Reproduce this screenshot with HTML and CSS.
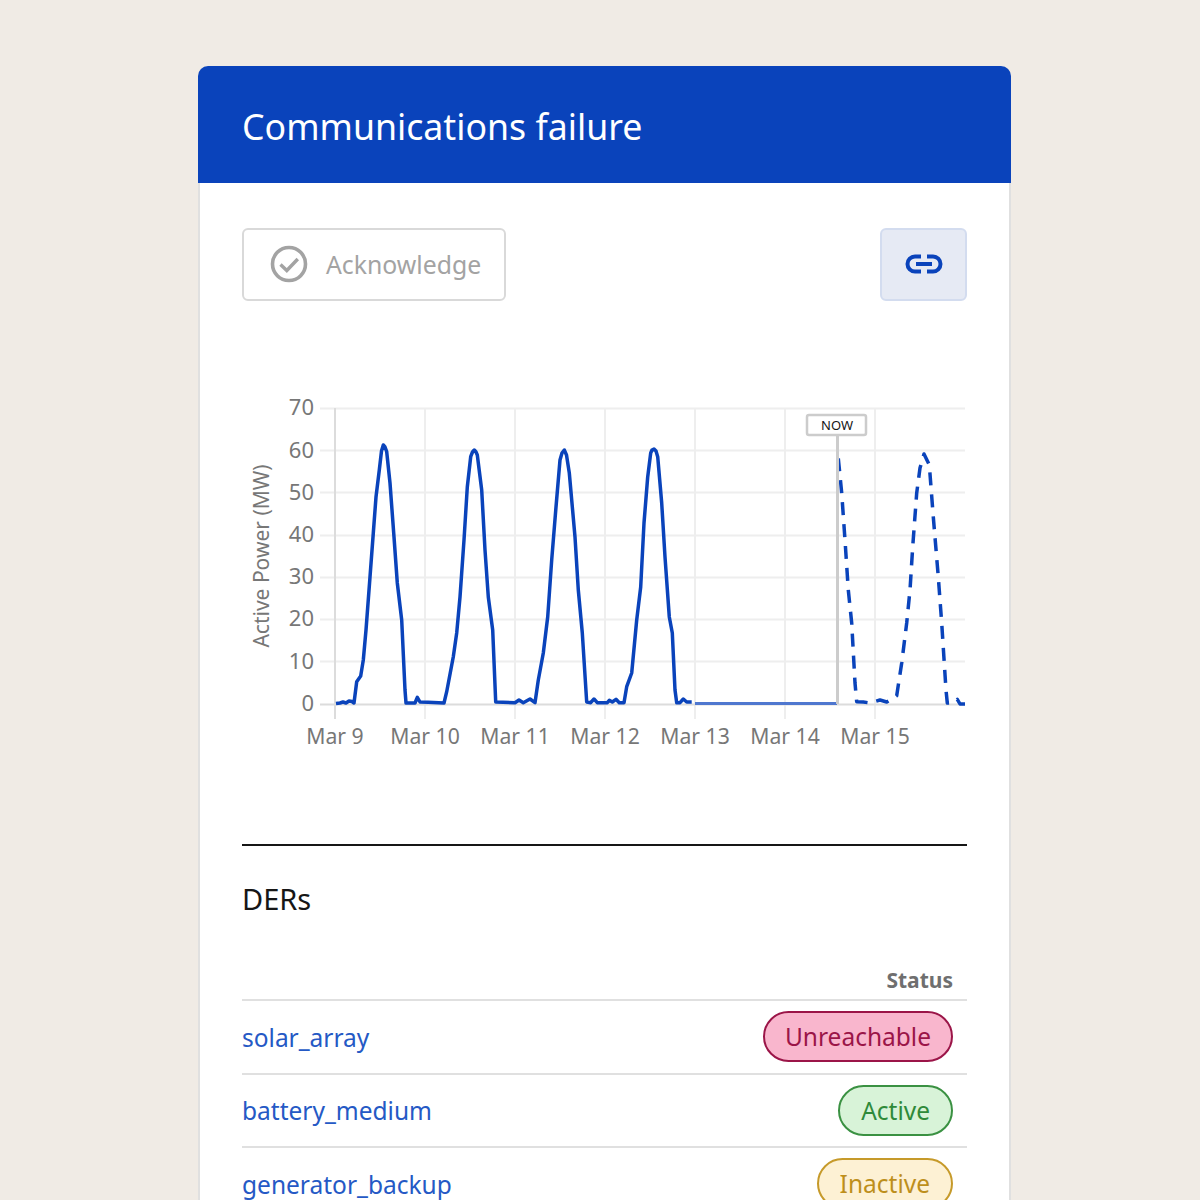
FILE: index.html
```html
<!DOCTYPE html>
<html lang="en">
<head>
<meta charset="UTF-8" />
<title>Communications failure</title>
<link rel="stylesheet" href="styles.css">
</head>
<body>
<div class="card">
  <div class="card-header">
    <h1>Communications failure</h1>
  </div>
  <div class="card-body">
    <div class="actions">
      <button class="ack-btn" type="button" disabled>
        <svg class="ack-icon" viewBox="0 0 38 38" width="38" height="38" aria-hidden="true">
          <circle cx="19" cy="19" r="16.5" fill="none" stroke="#a3a3a3" stroke-width="3.6"/>
          <path d="M10.5 19.5l6.3 6 11-11.5" fill="none" stroke="#a3a3a3" stroke-width="3.4"/>
        </svg>
        <span>Acknowledge</span>
      </button>
      <button class="link-btn" type="button" aria-label="Copy link">
        <svg viewBox="0 0 38 20" width="38" height="20" aria-hidden="true">
          <path d="M16 2.5H10a7.5 7.5 0 0 0 0 15h6M22 2.5h6a7.5 7.5 0 0 1 0 15h-6M11 10h16" fill="none" stroke="#0a43bb" stroke-width="4"/>
        </svg>
      </button>
    </div>

    <svg class="chart" viewBox="242 380 725 400" width="725" height="400" role="img" aria-label="Active power chart">
      <g class="grid">
        <path d="M320 408.5H965M320 450.5H965M320 492.5H965M320 535.5H965M320 577.5H965M320 619.5H965M320 661.5H965"/>
        <path d="M425 408V719M515 408V719M605 408V719M695 408V719M785 408V719M875 408V719"/>
      </g>
      <path class="axis" d="M335 408V719M320 704.5H965"/>

      <g class="y-labels">
        <text x="314" y="415">70</text>
        <text x="314" y="458">60</text>
        <text x="314" y="500">50</text>
        <text x="314" y="542">40</text>
        <text x="314" y="584">30</text>
        <text x="314" y="626">20</text>
        <text x="314" y="669">10</text>
        <text x="314" y="711">0</text>
      </g>
      <g class="x-labels">
        <text x="335" y="744">Mar 9</text>
        <text x="425" y="744">Mar 10</text>
        <text x="515" y="744">Mar 11</text>
        <text x="605" y="744">Mar 12</text>
        <text x="695" y="744">Mar 13</text>
        <text x="785" y="744">Mar 14</text>
        <text x="875" y="744">Mar 15</text>
      </g>
      <text class="y-title" transform="translate(269 556) rotate(-90)">Active Power (MW)</text>

      <polyline class="series" points="336,703.5 340,703 343,702 346,703 349,701 352,701.5 354,703 356.7,681.7 360.7,676 363.3,660 366,630 370,577 373.3,533 376,497 379.3,470 381.5,451 383.3,445 385,447 386.7,451.7 390,483 394,537 397.3,583 401.7,620 405,690 406,703 415,703 417.3,697.3 420,702 428,702.3 444,703 446.7,691.7 453.3,656.7 456.7,633 460,597 464,540 467.3,487 470.7,456.7 472.5,452 474.3,450 476,452 477.3,455 481.7,490 485,550 488.3,597 492.7,630 495.7,702 515,702.7 519,700 523.3,702.7 530,699 535,702.7 538.3,680 543.3,653 547.7,617 551.7,560 556,507 560,460 562,453 564.3,450 566.5,455 569.3,473 575,537 578.3,590 582.3,633 586.7,702 590.7,702.7 594,699 597.3,702.7 607.3,702.7 609.3,700.3 612.3,702 616,699.3 619.3,702.7 624,702.7 626.7,686.7 631.7,673 636.7,620 640.7,587 644,523 647.7,477 650.7,453 652,450 654,449 656,451 657.7,456.7 661.7,503 665,557 669.3,617 672.3,633 675,690 676.7,702.7 680,702.7 683.3,699 686.7,702 691.7,702"/>
      <path class="series-gap" d="M695 703.5H837"/>
      <polyline class="series forecast" points="838.3,458.3 841.7,493 845,540 848.3,590 851.7,623 855,683 856.7,701.7 863.3,702 870,703 880,700 886.7,702 896.7,695.7 901.7,663 906.7,623 910,590 912.7,547 916.7,493 920,468 924,454 929.3,465 933.3,517 938.3,577 941.7,623 946,690 947.3,703 953.3,702.7 957.3,699.3 960,704 965,704"/>

      <path class="now-line" d="M837.5 435V704"/>
      <rect class="now-box" x="807" y="415" width="59" height="20" rx="2"/>
      <text class="now-text" x="837" y="430">NOW</text>
    </svg>

    <hr class="divider">

    <h2 class="section-title">DERs</h2>

    <table class="der-table">
      <thead>
        <tr><th></th><th class="status-col">Status</th></tr>
      </thead>
      <tbody>
        <tr>
          <td><a href="#">solar_array</a></td>
          <td class="status-col"><span class="pill pill-red">Unreachable</span></td>
        </tr>
        <tr>
          <td><a href="#">battery_medium</a></td>
          <td class="status-col"><span class="pill pill-green">Active</span></td>
        </tr>
        <tr>
          <td><a href="#">generator_backup</a></td>
          <td class="status-col"><span class="pill pill-yellow">Inactive</span></td>
        </tr>
      </tbody>
    </table>
  </div>
</div>
</body>
</html>
```

FILE: styles.css
```css
* {
  box-sizing: border-box;
}
html, body {
  height: 1200px;
  overflow: hidden;
}
body {
  margin: 0;
  padding-top: 66px;
  background: #f0ebe5;
  font-family: "Noto Sans", "Liberation Sans", sans-serif;
  color: #161616;
}
.card {
  width: 813px;
  margin-left: 198px;
  min-height: 1200px;
  background: #fff;
  border: 2px solid #e0e0e0;
  border-top: none;
  border-radius: 10px 10px 0 0;
}
.card-header {
  height: 117px;
  margin: 0 -2px;
  padding: 2px 44px 0;
  display: flex;
  align-items: center;
  background: #0a43bb;
  border-radius: 10px 10px 0 0;
}
.card-header h1 {
  margin: 0;
  font-size: 35.7px;
  font-weight: 400;
  color: #fff;
}
.card-body {
  padding: 45px 42px 0;
}
.actions {
  display: flex;
  justify-content: space-between;
  height: 73px;
}
.ack-btn {
  width: 264px;
  padding: 0 0 2px 26px;
  display: flex;
  align-items: center;
  gap: 18px;
  background: #fff;
  border: 2px solid #d9d9d9;
  border-radius: 6px;
  font: inherit;
  font-size: 24.8px;
  color: #a3a3a3;
}
.link-btn {
  width: 87px;
  padding: 0 0 1px;
  display: flex;
  align-items: center;
  justify-content: center;
  background: #e6eaf4;
  border: 2px solid #d3dcef;
  border-radius: 6px;
}
.chart {
  display: block;
  margin-top: 79px;
}
.grid path {
  fill: none;
  stroke: #eeeeee;
  stroke-width: 2;
}
.axis {
  fill: none;
  stroke: #dcdcdc;
  stroke-width: 2;
}
.y-labels text {
  font-size: 22px;
  fill: #777;
  text-anchor: end;
}
.x-labels text {
  font-size: 21.2px;
  fill: #777;
  text-anchor: middle;
}
.y-title {
  font-size: 21px;
  fill: #777;
  text-anchor: middle;
}
.series {
  fill: none;
  stroke: #0a43bb;
  stroke-width: 3.5;
  stroke-linejoin: round;
}
.forecast {
  stroke-dasharray: 13 9;
}
.series-gap {
  fill: none;
  stroke: #4f77cf;
  stroke-width: 3;
}
.now-line {
  fill: none;
  stroke: #cccccc;
  stroke-width: 3;
}
.now-box {
  fill: #fff;
  stroke: #cccccc;
  stroke-width: 2.5;
}
.now-text {
  font-size: 13px;
  fill: #161616;
  text-anchor: middle;
}
.divider {
  height: 2px;
  margin: 64px 0 0;
  border: none;
  background: #161616;
}
.section-title {
  margin: 33px 0 0;
  font-size: 29px;
  line-height: 40px;
  font-weight: 400;
}
.der-table {
  width: 100%;
  margin-top: 45px;
  border-collapse: collapse;
}
.der-table th {
  height: 36px;
  padding: 0 14px 3px 0;
  border-bottom: 2px solid #e0e0e0;
  font-size: 21px;
  font-weight: 700;
  color: #6f6f6f;
}
.der-table td {
  height: 73.6px;
  padding: 1px 0 0;
  border-bottom: 2px solid #e0e0e0;
  font-size: 24.5px;
}
.der-table a {
  color: #2559c5;
  text-decoration: none;
}
.status-col {
  text-align: right;
}
.der-table td.status-col {
  padding: 0 14px 0 0;
  line-height: 0;
}
.pill {
  display: inline-block;
  height: 51px;
  padding: 0 21px;
  line-height: 48px;
  border: 2px solid;
  border-radius: 26px;
  vertical-align: top;
}
.pill-red {
  padding: 0 20px;
  background: #f9b6cd;
  border-color: #9b1548;
  color: #9b1548;
}
.pill-green {
  background: #d8f3d8;
  border-color: #3a9142;
  color: #2f8a3a;
}
.pill-yellow {
  background: #fdf1d4;
  border-color: #c69a2a;
  color: #bd8f1c;
}
```
